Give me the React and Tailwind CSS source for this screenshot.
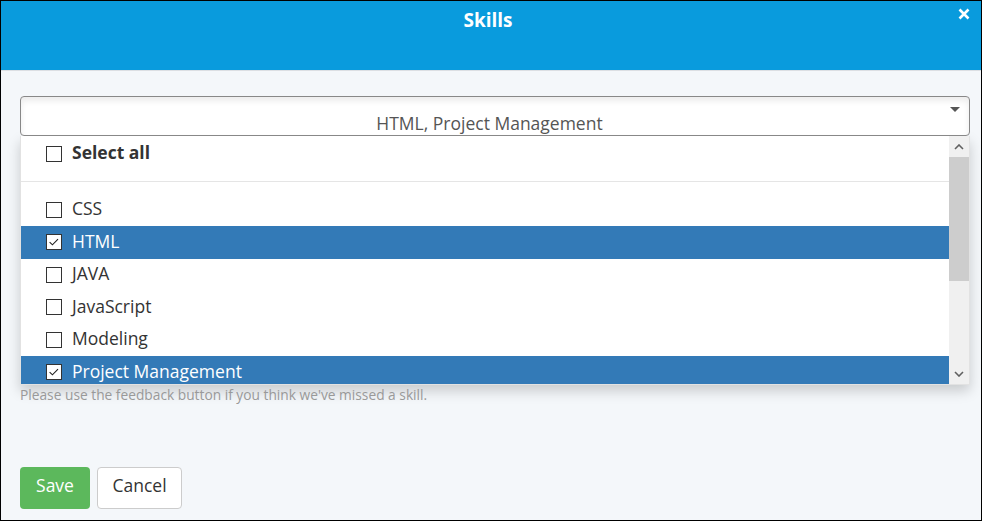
import React from 'react';

const skills = [
  { name: 'CSS', checked: false },
  { name: 'HTML', checked: true },
  { name: 'JAVA', checked: false },
  { name: 'JavaScript', checked: false },
  { name: 'Modeling', checked: false },
  { name: 'Project Management', checked: true },
];

function Box({ checked }) {
  return (
    <span className="flex h-4 w-4 shrink-0 items-center justify-center border border-[#333] bg-white">
      {checked && (
        <svg viewBox="0 0 16 16" className="h-[14px] w-[14px]">
          <path d="M3 8.2 L6.2 11.2 L12.6 4.6" fill="none" stroke="#222" strokeWidth="1.3" />
        </svg>
      )}
    </span>
  );
}

export default function App() {
  return (
    <div className="flex h-[521px] w-[982px] flex-col border border-black bg-[#f4f7fa] font-['Open_Sans',sans-serif] text-[#333]">
      <div className="relative h-[70px] shrink-0 border-b border-[#dcdfe3] bg-[#099bdd]">
        <h1 className="pt-[5px] pr-[6px] text-center text-[19px] font-bold leading-[28px] text-white">Skills</h1>
        <button className="absolute right-[11px] top-[7px] text-white">
          <svg viewBox="0 0 12 12" className="h-[12px] w-[12px]">
            <path d="M1.5 1.5 L10.5 10.5 M10.5 1.5 L1.5 10.5" stroke="white" strokeWidth="2.6" />
          </svg>
        </button>
      </div>

      <div className="flex flex-1 flex-col pl-[19px] pr-[11px] pt-[25px] pb-[11px]">
        <div className="relative h-[40px] rounded-[4px] border border-[#888] bg-white shadow-[inset_0_4px_6px_rgba(0,0,0,0.08)]">
          <div className="pt-[14px] pr-[11px] text-center text-[17.5px] leading-[24px] text-[#555]">HTML, Project Management</div>
          <span className="absolute right-[9px] top-[10px] h-0 w-0 border-x-[5px] border-t-[5px] border-x-transparent border-t-[#555]" />
        </div>

        <div className="flex h-[249px] shrink-0 overflow-hidden border border-t-0 border-[#e2e2e2] bg-white shadow-[0_6px_12px_rgba(0,0,0,0.18)]">
          <div className="flex-1 pt-[2px]">
            <div className="flex h-[32.5px] items-center gap-[10px] pl-[25px] text-[17.5px] font-bold">
              <Box checked={false} />
              <span className="mb-[4px]">Select all</span>
            </div>
            <div className="mt-[10.5px] mb-[11.5px] h-px bg-[#e5e5e5]" />
            {skills.map((s) => (
              <div
                key={s.name}
                className={
                  s.checked
                    ? 'flex h-[32.5px] items-center gap-[10px] bg-[#337ab7] pl-[25px] text-[17.5px] text-white'
                    : 'flex h-[32.5px] items-center gap-[10px] pl-[25px] text-[17.5px]'
                }
              >
                <Box checked={s.checked} />
                <span className="mb-[3px]">{s.name}</span>
              </div>
            ))}
          </div>
          <div className="flex w-[20px] flex-col items-center bg-[#f0f0f0]">
            <svg viewBox="0 0 10 6" className="mt-[8px] h-[6px] w-[10px]">
              <path d="M1 5 L5 1 L9 5" fill="none" stroke="#606060" strokeWidth="1.6" />
            </svg>
            <div className="mt-[7px] h-[124px] w-full bg-[#cdcdcd]" />
            <svg viewBox="0 0 10 6" className="mt-auto mb-[7px] h-[6px] w-[10px]">
              <path d="M1 1 L5 5 L9 1" fill="none" stroke="#606060" strokeWidth="1.6" />
            </svg>
          </div>
        </div>

        <p className="pt-[1px] text-[13.75px] leading-[18px] text-[#999]">
          Please use the feedback button if you think we've missed a skill.
        </p>

        <div className="mt-auto flex gap-[7px]">
          <button className="h-[42px] w-[70px] rounded-[4px] bg-[#5cb85c] pb-[5px] text-[17.5px] text-white">Save</button>
          <button className="h-[42px] w-[85px] rounded-[4px] border border-[#ccc] bg-white pb-[5px] text-[17.5px] text-[#333]">Cancel</button>
        </div>
      </div>
    </div>
  );
}
